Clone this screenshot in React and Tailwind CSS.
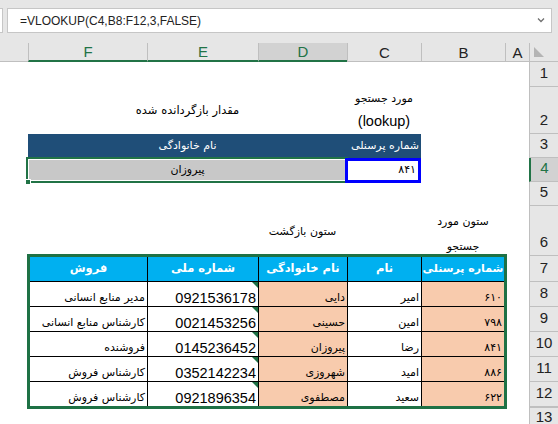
import { useState } from 'react'

const FA = "font-['DejaVu_Sans',sans-serif]"
const EN = "font-['Liberation_Sans',Arial,sans-serif]"

const COLS = [
  { id: 'F', w: 'w-[119px]', sel: true },
  { id: 'E', w: 'w-[111px]', sel: true },
  { id: 'D', w: 'w-[89px]', sel: true, active: true },
  { id: 'C', w: 'w-[74px]' },
  { id: 'B', w: 'w-[84px]' },
  { id: 'A', w: 'w-[24px]' },
]

const ROW_HEADS = [
  { n: 1, h: 'h-[25px]' },
  { n: 2, h: 'h-[47px]' },
  { n: 3, h: 'h-[24px]' },
  { n: 4, h: 'h-[24px]', active: true },
  { n: 5, h: 'h-[24px]' },
  { n: 6, h: 'h-[50px]' },
  { n: 7, h: 'h-[26px]' },
  { n: 8, h: 'h-[25px]' },
  { n: 9, h: 'h-[25px]' },
  { n: 10, h: 'h-[25px]' },
  { n: 11, h: 'h-[25px]' },
  { n: 12, h: 'h-[25px]' },
]

const PEOPLE = [
  ['۶۱۰', 'امیر', 'دایی', '0921536178', 'مدیر منابع انسانی'],
  ['۷۹۸', 'امین', 'حسینی', '0021453256', 'کارشناس منابع انسانی'],
  ['۸۴۱', 'رضا', 'پیروزان', '0145236452', 'فروشنده'],
  ['۸۸۶', 'امید', 'شهروزی', '0352142234', 'کارشناس فروش'],
  ['۶۲۲', 'سعید', 'مصطفوی', '0921896354', 'کارشناس فروش'],
]

export default function App() {
  const [formula] = useState('=VLOOKUP(C4,B8:F12,3,FALSE)')

  return (
    <div className="h-[424px] w-[558px] overflow-hidden whitespace-nowrap bg-white text-black">
      <FormulaBar formula={formula} />
      <ColumnHeaders />
      <div className="flex">
        <Sheet />
        <RowHeaders />
      </div>
    </div>
  )
}

function FormulaBar({ formula }) {
  return (
    <div className="flex h-[43px] items-start gap-[4px] bg-[#e6e6e6] pt-[8px] pr-[6px]">
      <div className="h-[25px] w-[3px] border-y border-r border-[#c6c6c6] bg-white" />
      <div className="flex h-[25px] flex-1 items-center justify-between border border-[#c6c6c6] bg-white pl-[12px] pr-[6px]">
        <span className={`${EN} text-[12px] text-[#222]`}>{formula}</span>
        <svg width="8" height="6" viewBox="0 0 8 6" className="mb-[2px]">
          <path d="M1 1.5 L4 4.5 L7 1.5" fill="none" stroke="#707070" strokeWidth="1.3" />
        </svg>
      </div>
    </div>
  )
}

function ColumnHeaders() {
  return (
    <div className={`flex h-[19px] bg-[#e6e6e6] ${EN} text-[15px]`}>
      <div className="w-[28px] border-b border-[#bfbfbf]" />
      {COLS.map((c) => (
        <div
          key={c.id}
          className={`${c.w} flex items-center justify-center border-l border-[#bfbfbf] leading-none ${
            c.sel ? 'border-b-2 border-b-[#217346] text-[#217346]' : 'border-b text-[#222]'
          } ${c.active ? 'bg-[#d2d2d2]' : ''}`}
        >
          {c.id}
        </div>
      ))}
      <div className="flex w-[29px] items-end border-b border-l border-[#bfbfbf] pb-[4px] pl-[4px]">
        <svg width="10" height="10" viewBox="0 0 10 10">
          <path d="M0 0 L0 10 L10 10 Z" fill="#b4b4b4" />
        </svg>
      </div>
    </div>
  )
}

function RowHeaders() {
  return (
    <div className={`w-[29px] border-l border-[#bfbfbf] bg-[#e6e6e6] ${EN} text-[15px]`}>
      {ROW_HEADS.map((r) => (
        <div
          key={r.n}
          className={`${r.h} flex items-end justify-center border-b border-[#bfbfbf] pb-[6px] leading-none ${
            r.active ? '-ml-px border-l-2 border-l-[#217346] bg-[#d2d2d2] text-[#217346]' : 'text-[#222]'
          }`}
        >
          {r.n}
        </div>
      ))}
      {/* row 13 is only partly in view */}
      <div className="flex h-[25px] justify-center border-t border-[#bfbfbf] pt-[1px] leading-none text-[#222]">
        13
      </div>
    </div>
  )
}

function Sheet() {
  return (
    <div className={`w-[529px] ${FA} text-[11px]`} dir="ltr">
      <div className="h-[25px]" />

      {/* row 2 */}
      <div className="flex h-[47px]">
        <div className="w-[28px]" />
        <div className="flex w-[319px] items-center justify-center text-[11.5px]" dir="rtl">
          مقدار بازگردانده شده
        </div>
        <div className="flex w-[74px] flex-col items-center leading-[23px]">
          <span dir="rtl">مورد جستجو</span>
          <span dir="ltr" className={`${EN} text-[14.5px]`}>
            (lookup)
          </span>
        </div>
      </div>

      {/* row 3 */}
      <div className="flex h-[24px]">
        <div className="w-[28px]" />
        <div className="flex w-[393px] bg-[#1f4e78] text-white">
          <div className="flex w-[319px] items-center justify-center" dir="rtl">
            نام خانوادگی
          </div>
          <div className="flex w-[74px] items-center justify-end pr-[2px]" dir="ltr">
            <span dir="rtl">شماره پرسنلی</span>
          </div>
        </div>
      </div>

      {/* row 4 */}
      <div className="flex h-[24px]">
        <div className="w-[28px]" />
        <div className="relative flex w-[319px] items-center justify-center bg-[#c8c8c8]" dir="rtl">
          پیروزان
          <div className="absolute -top-[1px] -right-[1px] -bottom-[1px] -left-[2px] border-2 border-[#217346] shadow-[inset_0_0_0_1px_white]" />
          <div className="absolute -bottom-[3px] -left-[3px] h-[6px] w-[6px] border border-white bg-[#217346]" />
        </div>
        <div className="relative z-10 -ml-[2px] flex h-[25px] w-[76px] items-center justify-end border-[3px] border-[#0000ff] bg-white pr-[2px]">
          ۸۴۱
        </div>
      </div>

      <div className="h-[24px]" />

      {/* row 6 */}
      <div className="flex h-[48px]">
        <div className="w-[28px]" />
        <div className="w-[119px]" />
        <div className="w-[111px]" />
        <div className="flex w-[89px] items-center justify-center pt-[5px]" dir="rtl">
          ستون بازگشت
        </div>
        <div className="w-[74px]" />
        <div className="flex w-[84px] flex-col items-center pt-[3px] leading-[25px]" dir="rtl">
          <span>ستون مورد</span>
          <span>جستجو</span>
        </div>
      </div>

      <Table />
    </div>
  )
}

function Table() {
  return (
    <div className="ml-[27px] h-[155px] w-[480px] border-[3px] border-[#1e7145]">
      <div className="flex h-[25px] border-b border-black bg-[#00b0f0] text-[11.5px] font-bold text-white">
        <HeadCell w="w-[117px]" first>فروش</HeadCell>
        <HeadCell w="w-[111px]">شماره ملی</HeadCell>
        <HeadCell w="w-[89px]">نام خانوادگی</HeadCell>
        <HeadCell w="w-[74px]">نام</HeadCell>
        <HeadCell w="w-[83px]" small>شماره پرسنلی</HeadCell>
      </div>
      {PEOPLE.map((p, i) => {
        const last = i === PEOPLE.length - 1
        return (
          <div key={p[3]} className={`flex ${last ? 'h-[24px]' : 'h-[25px] border-b border-black'}`}>
            <Cell w="w-[117px]" first>{p[4]}</Cell>
            <div className="relative flex w-[111px] items-end justify-end border-l border-black pr-[2px] pb-[1px]">
              <span className={`${EN} text-[14.5px] leading-none`}>{p[3]}</span>
              <span className="absolute top-0 right-0 h-0 w-0 border-t-[6px] border-l-[6px] border-t-[#1e7145] border-l-transparent" />
            </div>
            <Cell w="w-[89px]" peach>{p[2]}</Cell>
            <Cell w="w-[74px]">{p[1]}</Cell>
            <Cell w="w-[83px]" peach>{p[0]}</Cell>
          </div>
        )
      })}
    </div>
  )
}

function HeadCell({ w, first, small, children }) {
  return (
    <div
      className={`${w} flex items-center justify-center overflow-hidden ${small ? 'text-[11px]' : ''} ${
        first ? '' : 'border-l border-black'
      }`}
      dir="rtl"
    >
      {children}
    </div>
  )
}

function Cell({ w, first, peach, children }) {
  return (
    <div
      className={`${w} flex items-end justify-end pr-[2px] pb-[3px] ${first ? '' : 'border-l border-black'} ${
        peach ? 'bg-[#f8cbad]' : 'bg-white'
      }`}
    >
      <span dir="rtl" className="leading-none">
        {children}
      </span>
    </div>
  )
}
